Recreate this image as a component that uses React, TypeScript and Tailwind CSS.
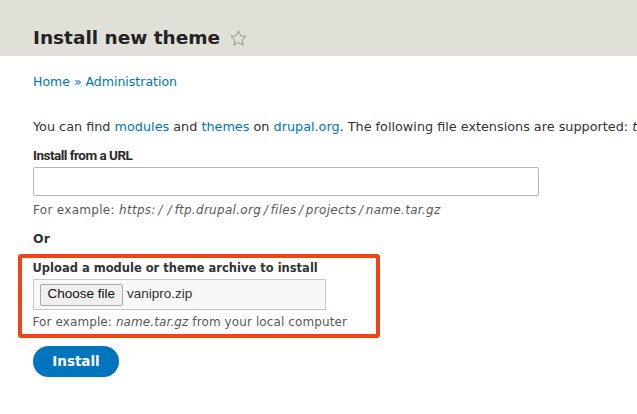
import { useState } from 'react';

// Звезда рядом с заголовком (добавить в ярлыки)
function StarIcon() {
  return (
    <svg width="19" height="19" viewBox="0 0 24 24" fill="none" stroke="#8c8c8c" strokeWidth="1.2" strokeLinejoin="round">
      <path d="M12 2.5l2.9 6.2 6.6.7-5 4.5 1.4 6.6L12 17.2l-5.9 3.3 1.4-6.6-5-4.5 6.6-.7z" />
    </svg>
  );
}

// Косая черта в примере адреса — в оригинале она широкая
const Slash = () => <span className="px-[2.5px]">/</span>;

export default function App() {
  const [url, setUrl] = useState<string>('');

  return (
    <div className="min-h-[414px] overflow-hidden bg-white text-[#333] font-['DejaVu_Sans',sans-serif]">
      <div className="h-[56px] bg-[#e0e0d8] px-[33px] flex items-end pb-[8px]">
        <h1 className="text-[18.5px] font-bold text-[#232323] flex items-center gap-[9px] leading-none">
          Install new theme
          <StarIcon />
        </h1>
      </div>

      <div className="px-[33px]">
        <div className="mt-[18px] text-[12.5px] leading-[16px]">
          <a href="#" className="text-[#0074bd]">Home</a>
          <span className="text-[#0074bd]"> » </span>
          <a href="#" className="text-[#0074bd]">Administration</a>
        </div>

        <p className="mt-[29px] text-[12.8px] leading-[16px] whitespace-nowrap">
          You can find <a href="#" className="text-[#0074bd]">modules</a> and{' '}
          <a href="#" className="text-[#0074bd]">themes</a> on{' '}
          <a href="#" className="text-[#0074bd]">drupal.org</a>. The following file extensions are supported:{' '}
          <em>tar tgz gz bz2 zip</em>.
        </p>

        <form className="flex flex-col">
          <label className="mt-[12px] text-[13.5px] font-bold leading-[16px] tracking-[-0.5px] text-[#2a2a2a] font-['Liberation_Sans_Narrow','Roboto',sans-serif]">
            Install from a URL
          </label>
          <input
            type="text"
            value={url}
            onChange={(e) => setUrl(e.target.value)}
            className="mt-[4px] w-[506px] h-[29px] border border-[#b8b8b8] rounded-[2px] px-2 outline-none"
          />
          <div className="mt-[7px] text-[12px] leading-[14px] tracking-[0.3px] text-[#595959] whitespace-nowrap">
            For example:{' '}
            <em>
              https:<Slash /><Slash />ftp.drupal.org<Slash />files<Slash />projects<Slash />name.tar.gz
            </em>
          </div>

          <div className="mt-[14px] text-[12.5px] font-bold leading-[16px]">Or</div>

          <div className="mt-[7px] -mx-[15px] w-[362px] border-[4.5px] border-[#f04416] rounded-[3px] px-[10.5px] pt-[1.5px] pb-[5px]">
            <label className="block text-[11.5px] font-bold leading-[16px]">Upload a module or theme archive to install</label>
            <div className="mt-[3.5px] w-[293px] h-[31px] border border-[#c8c8c8] bg-[#f8f8f8] flex items-center pl-[6px] font-['Liberation_Sans',sans-serif] text-[13.5px]">
              <span className="h-[22px] px-[7px] flex items-center border border-[#a9a9a9] bg-[#efefef] text-[#111] rounded-[2px]">
                Choose file
              </span>
              <span className="ml-[4px] text-[#333]">vanipro.zip</span>
            </div>
            <div className="mt-[5px] text-[12px] leading-[14px] tracking-[0.1px] text-[#595959]">
              For example: <em>name.tar.gz</em> from your local computer
            </div>
          </div>

          <div className="mt-[8px]">
            <button
              type="button"
              className="w-[86px] h-[31px] rounded-full bg-[#0074bd] text-white text-[13.5px] font-bold"
            >
              Install
            </button>
          </div>
        </form>
      </div>
    </div>
  );
}
